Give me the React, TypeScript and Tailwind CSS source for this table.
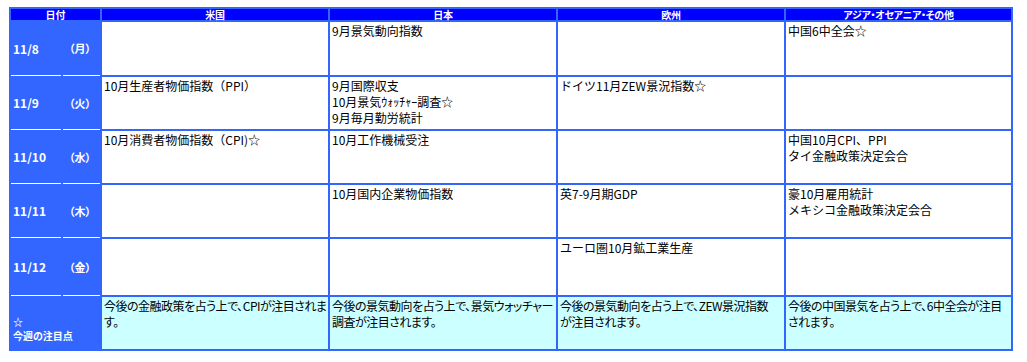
// 今週の主要経済指標カレンダー（日付×地域）を表で描く。
const FONT = "font-['Noto_Sans_CJK_JP','Liberation_Sans',sans-serif]";

type Row = {
  date: string;
  day: string;
  cells: string[][];
  height: string;
};

const ROWS: Row[] = [
  { date: "11/8", day: "（月）", cells: [[], ["9月景気動向指数"], [], ["中国6中全会☆"]], height: "h-[54px]" },
  {
    date: "11/9",
    day: "（火）",
    cells: [["10月生産者物価指数（PPI）"], ["9月国際収支", "10月景気ｳｫｯﾁｬｰ調査☆", "9月毎月勤労統計"], ["ドイツ11月ZEW景況指数☆"], []],
    height: "h-[53px]",
  },
  {
    date: "11/10",
    day: "（水）",
    cells: [["10月消費者物価指数（CPI)☆"], ["10月工作機械受注"], [], ["中国10月CPI、PPI", "タイ金融政策決定会合"]],
    height: "h-[53px]",
  },
  {
    date: "11/11",
    day: "（木）",
    cells: [[], ["10月国内企業物価指数"], ["英7-9月期GDP"], ["豪10月雇用統計", "メキシコ金融政策決定会合"]],
    height: "h-[53px]",
  },
  { date: "11/12", day: "（金）", cells: [[], [], ["ユーロ圏10月鉱工業生産"], []], height: "h-[57px]" },
];

const NOTES: string[][] = [
  ["今後の金融政策を占う上で、CPIが注目されま", "す。"],
  ["今後の景気動向を占う上で、景気ウォッチャー", "調査が注目されます。"],
  ["今後の景気動向を占う上で、ZEW景況指数", "が注目されます。"],
  ["今後の中国景気を占う上で、6中全会が注目", "されます。"],
];

const HEADERS = ["米国", "日本", "欧州", "アジア・オセアニア・その他"];

// 本文セル。行ごとに改行して並べる。
function Cell({ lines, tone }: { lines: string[]; tone: string }): JSX.Element {
  return (
    <div className={`${tone} overflow-hidden pl-[2px] pt-[1px] text-[12px] leading-[16px] text-black`}>
      {lines.map((line) => (
        <div key={line} className="whitespace-nowrap">
          {line}
        </div>
      ))}
    </div>
  );
}

export default function App(): JSX.Element {
  return (
    <div className={`${FONT} min-h-[362px] bg-white pl-[9px] pt-[7px]`}>
      <div className="grid w-[1004px] grid-cols-[50px_37px_226px_226px_226px_225px] gap-[2px] bg-[#3366ff] p-[2px]">
        <div className="col-span-2 flex h-[11px] items-center justify-center bg-[#0000ff] text-[10px] font-bold leading-none text-white">
          日付
        </div>
        {HEADERS.map((title) => (
          <div
            key={title}
            className="flex h-[11px] items-center justify-center bg-[#0000ff] text-[10px] font-bold leading-none tracking-[-0.3px] text-white [font-feature-settings:'palt']"
          >
            {title}
          </div>
        ))}

        {ROWS.map((row) => (
          <div key={row.date} className="contents">
            <div className={`${row.height} -mb-px flex items-center border-b border-white pl-[2px] text-[12px] font-bold text-white`}>
              {row.date}
            </div>
            <div className="-mb-px flex items-center border-b border-white pl-[6px] text-[11px] font-bold text-white [font-feature-settings:'palt']">
              {row.day}
            </div>
            {row.cells.map((lines, index) => (
              <Cell key={index} lines={lines} tone="bg-white" />
            ))}
          </div>
        ))}

        <div className="col-span-2 flex h-[52px] flex-col justify-center pl-[2px] pt-[12px] text-[10px] font-bold leading-[14px] text-white [font-feature-settings:'palt']">
          <span>☆</span>
          <span>今週の注目点</span>
        </div>
        {NOTES.map((lines, index) => (
          <Cell key={index} lines={lines} tone="bg-[#ccffff] tracking-[-0.5px] [font-feature-settings:'palt']" />
        ))}
      </div>
    </div>
  );
}
